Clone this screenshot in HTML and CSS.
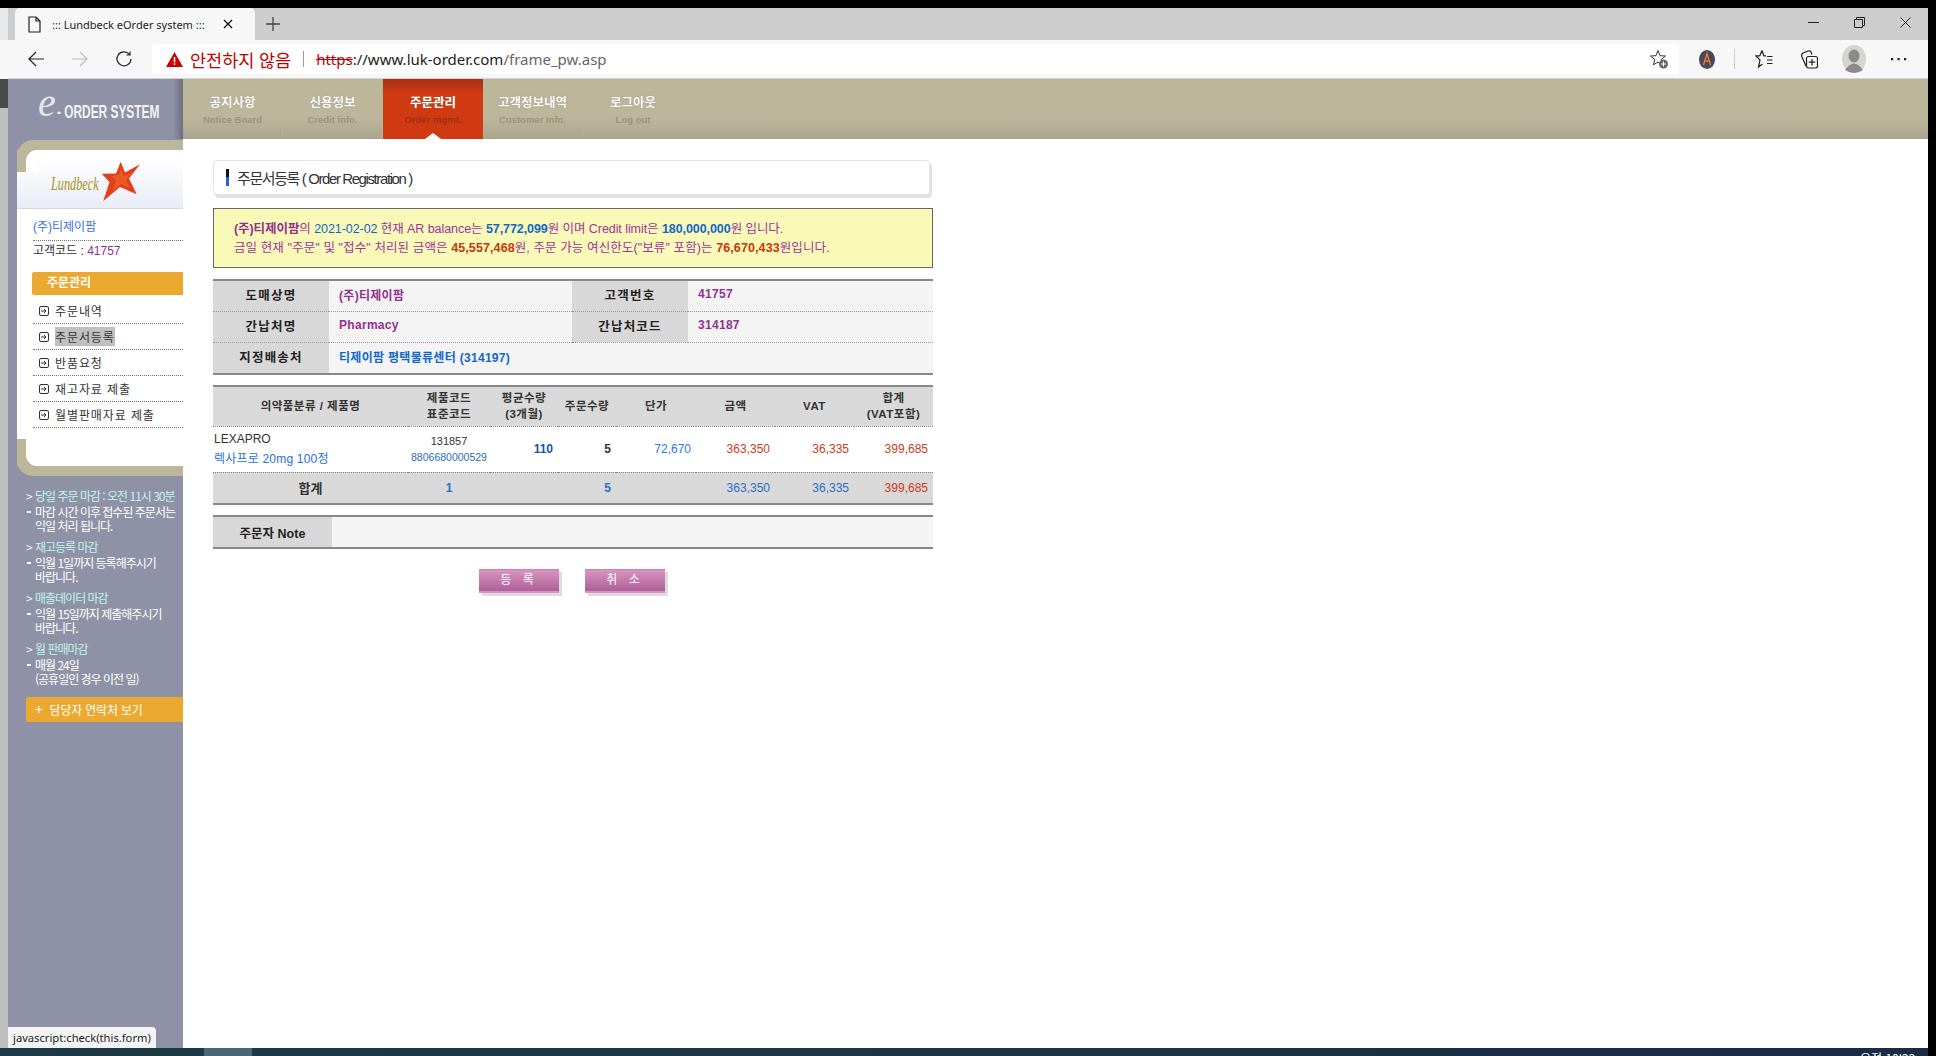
FILE: index.html
```html
<!DOCTYPE html>
<html lang="ko">
<head>
    <meta charset="UTF-8">
    <title>:: Lundbeck eOrder system ::</title>
    <link rel="stylesheet" href="styles.css">
</head>
<body>

<div class="screen">
    <div class="left-strip">
        <div class="ls-tab"></div>
        <div class="ls-top"></div>
        <div class="ls-mid"></div>
        <div class="ls-rest"></div>
    </div>

    <div class="window">
        <!-- tab strip -->
        <div class="tabstrip">
            <div class="tab">
                <svg class="tab-doc" width="13" height="17" viewBox="0 0 13 17" fill="none" stroke="#222" stroke-width="1.2"><path d="M1 1h7l4 4v11H1zM8 1v4h4"/></svg>
                <span class="tab-title">::: Lundbeck eOrder system :::</span>
                <svg class="tab-close" width="10" height="10" viewBox="0 0 10 10" stroke="#111" stroke-width="1.4"><path d="M1 1l8 8M9 1l-8 8"/></svg>
            </div>
            <svg class="tab-new" width="14" height="14" viewBox="0 0 14 14" stroke="#444" stroke-width="1.3"><path d="M7 0v14M0 7h14"/></svg>
            <div class="win-btns">
                <div class="win-btn"><svg width="11" height="11" viewBox="0 0 11 11" stroke="#222"><path d="M0 5.5h11"/></svg></div>
                <div class="win-btn"><svg width="11" height="11" viewBox="0 0 11 11" fill="none" stroke="#222"><path d="M.5 2.5h8v8h-8zM2.5 2.5v-2h8v8h-2"/></svg></div>
                <div class="win-btn"><svg width="11" height="11" viewBox="0 0 11 11" stroke="#222"><path d="M.5.5l10 10M10.5.5l-10 10"/></svg></div>
            </div>
        </div>

        <!-- toolbar -->
        <div class="toolbar">
            <div class="tb-btn"><svg width="16" height="16" viewBox="0 0 16 16" fill="none" stroke="#222" stroke-width="1.2"><path d="M16 8H1M8 1L1 8l7 7"/></svg></div>
            <div class="tb-btn"><svg width="16" height="16" viewBox="0 0 16 16" fill="none" stroke="#bbb" stroke-width="1.2"><path d="M0 8h15M8 1l7 7-7 7"/></svg></div>
            <div class="tb-btn"><svg width="16" height="16" viewBox="0 0 16 16" fill="none" stroke="#222" stroke-width="1.2"><path d="M13.5 3.5A7 7 0 1 0 15 8M14 .5v3.5h-3.6"/></svg></div>
            <div class="addr">
                <svg class="addr-warn" width="17" height="15" viewBox="0 0 17 15"><path d="M8.5 0L17 15H0z" fill="#c80000"/><path d="M7.7 5h1.6v5.2H7.7zM7.7 11.2h1.6v1.6H7.7z" fill="#fff"/></svg>
                <span class="addr-warn-text">안전하지 않음</span>
                <span class="addr-sep"></span>
                <span class="addr-url"><s class="url-https">https</s>://www.luk-order.com<span class="url-path">/frame_pw.asp</span></span>
                <svg class="addr-star" width="20" height="20" viewBox="0 0 20 20"><path d="M9 1.5l2 5.2 5.5.3-4.3 3.5 1.4 5.3L9 13l-4.6 2.8 1.4-5.3L1.500 7 7 6.700z" fill="none" stroke="#333"/><circle cx="14.500" cy="15" r="4.500" fill="#666"/><path d="M14.500 12.500v5M12 15h5" stroke="#fff"/></svg>
            </div>
            <div class="tb-avatar">
                <svg width="16" height="19" viewBox="0 0 16 19"><ellipse cx="8" cy="9.500" rx="8" ry="9.500" fill="#474761"/><path d="M4.500 15L8 3.500 11.500 15M5.800 11h4.400" fill="none" stroke="#e8851f" stroke-width="1.300"/></svg>
            </div>
            <span class="tb-sep"></span>
            <div class="tb-icon"><svg width="18" height="20" viewBox="0 0 18 20" fill="none" stroke="#222" stroke-width="1.200"><path d="M7 1.500l1.800 5.300H11M4.800 6.800H.8L5 11 3.500 18 7.500 15M7 1.500L4.800 6.800M12 7.500h5.500M12 11h5.500M12 14.500h5.500"/></svg></div>
            <div class="tb-icon"><svg width="18" height="20" viewBox="0 0 18 20" fill="none" stroke="#222" stroke-width="1.200"><path d="M6 17L2 8q-1-3 1-4l5-2q2-.5 3 1l1 2.500"/><rect x="6.500" y="7.500" width="11" height="11.500" rx="2"/><path d="M12 10v6.500M8.800 13.200h6.400"/></svg></div>
            <div class="tb-icon"><svg width="24" height="28" viewBox="0 0 24 28"><ellipse cx="12" cy="14" rx="12" ry="14" fill="#d4d4d2"/><ellipse cx="12" cy="11" rx="5.500" ry="6.500" fill="#8b8a88"/><path d="M3 25q9-13 18 0q-9 6-18 0z" fill="#8b8a88"/></svg></div>
            <div class="tb-icon"><svg width="16" height="4" viewBox="0 0 16 4" fill="#222"><rect x="0" y="1" width="2.200" height="2.200"/><rect x="6.500" y="1" width="2.200" height="2.200"/><rect x="13" y="1" width="2.200" height="2.200"/></svg></div>
        </div>

        <!-- page -->
        <div class="page">
            <aside class="side">
                <div class="brand">
                    <span class="brand-e">e</span>
                    <span class="brand-text">- ORDER SYSTEM</span>
                </div>

                <div class="card">
                    <div class="card-in">
                        <div class="corner"></div>
                        <div class="corner corner-bot"></div>
                        <div class="logo-box">
                            <span class="lund">Lundbeck</span>
                            <svg class="star" width="41" height="41" viewBox="0 0 41 41"><path d="M20.700.7L25 11.500 40 3.300 29 17.500 36.700 33.300 20 26 3.300 40 9.500 21 1.700 12.700 16 12.500z" fill="#e23f1c"/><path d="M21 8l3 7 7-3-5 7 4 8-9-4-8 7 3-11-5-4 8-1z" fill="#ea5a22"/></svg>
                        </div>
                        <div class="cust-name">(주)티제이팜</div>
                        <div class="cust-code">고객코드 : <span class="purple">41757</span></div>
                        <div class="menu-head">주문관리</div>
                        <ul class="menu">
                            <li><svg class="mi" width="10" height="10" viewBox="0 0 10 10" fill="none" stroke="#333"><rect x=".5" y=".5" width="9" height="9" rx="1.500"/><path d="M2 5h5M5 3l2 2-2 2"/></svg><span>주문내역</span></li>
                            <li><svg class="mi" width="10" height="10" viewBox="0 0 10 10" fill="none" stroke="#333"><rect x=".5" y=".5" width="9" height="9" rx="1.500"/><path d="M2 5h5M5 3l2 2-2 2"/></svg><span class="sel">주문서등록</span></li>
                            <li><svg class="mi" width="10" height="10" viewBox="0 0 10 10" fill="none" stroke="#333"><rect x=".5" y=".5" width="9" height="9" rx="1.500"/><path d="M2 5h5M5 3l2 2-2 2"/></svg><span>반품요청</span></li>
                            <li><svg class="mi" width="10" height="10" viewBox="0 0 10 10" fill="none" stroke="#333"><rect x=".5" y=".5" width="9" height="9" rx="1.500"/><path d="M2 5h5M5 3l2 2-2 2"/></svg><span>재고자료 제출</span></li>
                            <li><svg class="mi" width="10" height="10" viewBox="0 0 10 10" fill="none" stroke="#333"><rect x=".5" y=".5" width="9" height="9" rx="1.500"/><path d="M2 5h5M5 3l2 2-2 2"/></svg><span>월별판매자료 제출</span></li>
                        </ul>
                    </div>
                </div>

                <div class="dues">
                    <div class="due">
                        <div class="due-title">당일 주문 마감 : 오전 11시 30분</div>
                        <div class="due-body">마감 시간 이후 접수된 주문서는<br>익일 처리 됩니다.</div>
                    </div>
                    <div class="due">
                        <div class="due-title">재고등록 마감</div>
                        <div class="due-body">익월 1일까지 등록해주시기<br>바랍니다.</div>
                    </div>
                    <div class="due">
                        <div class="due-title">매출데이터 마감</div>
                        <div class="due-body">익월 15일까지 제출해주시기<br>바랍니다.</div>
                    </div>
                    <div class="due">
                        <div class="due-title">월 판매마감</div>
                        <div class="due-body">매월 24일<br>(공휴일인 경우 이전 일)</div>
                    </div>
                </div>
                <div class="contact"><span class="plus">+</span>담당자 연락처 보기</div>
            </aside>

            <div class="content">
                <nav class="topnav">
                    <a class="nav-item"><b>공지사항</b><small>Notice Board</small></a>
                    <a class="nav-item"><b>신용정보</b><small>Credit info.</small></a>
                    <a class="nav-item active"><b>주문관리</b><small>Order mgmt.</small></a>
                    <a class="nav-item"><b>고객정보내역</b><small>Customer Info.</small></a>
                    <a class="nav-item"><b>로그아웃</b><small>Log out</small></a>
                </nav>

                <main class="main">
                    <h1 class="title"><span class="title-bar"></span>주문서등록 ( Order Registration )</h1>

                    <div class="notice">
                        <p class="n1"><b class="purple">(주)티제이팜</b>의 <span class="blue">2021-02-02</span> 현재 AR balance는 <b class="blue">57,772,099</b>원 이며 Credit limit은 <b class="blue">180,000,000</b>원 입니다.</p>
                        <p class="n2">금일 현재 "주문" 및 "접수" 처리된 금액은 <b class="red">45,557,468</b>원, 주문 가능 여신한도("보류" 포함)는 <b class="red">76,670,433</b>원입니다.</p>
                    </div>

                    <table class="info">
                        <colgroup><col class="c-label"><col class="c-val"><col class="c-label"><col></colgroup>
                        <tr><th>도매상명</th><td class="purple">(주)티제이팜</td><th>고객번호</th><td class="purple">41757</td></tr>
                        <tr><th>간납처명</th><td class="purple">Pharmacy</td><th>간납처코드</th><td class="purple">314187</td></tr>
                        <tr class="info-last"><th>지정배송처</th><td class="ship" colspan="3">티제이팜 평택물류센터 (314197)</td></tr>
                    </table>

                    <table class="order">
                        <colgroup>
                            <col class="o1"><col class="o2"><col class="o3"><col class="o4">
                            <col class="o5"><col class="o6"><col class="o7"><col class="o8">
                        </colgroup>
                        <tr class="o-head">
                            <th>의약품분류 / 제품명</th>
                            <th>제품코드<br>표준코드</th>
                            <th>평균수량<br>(3개월)</th>
                            <th>주문수량</th>
                            <th>단가</th>
                            <th>금액</th>
                            <th>VAT</th>
                            <th>합계<br>(VAT포함)</th>
                        </tr>
                        <tr class="o-row">
                            <td class="prod"><span class="prod-en">LEXAPRO</span><span class="prod-ko">렉사프로 20mg 100정</span></td>
                            <td class="codes">131857<br><span class="std">8806680000529</span></td>
                            <td class="num avg">110</td>
                            <td class="num qty">5</td>
                            <td class="num price">72,670</td>
                            <td class="num money">363,350</td>
                            <td class="num money">36,335</td>
                            <td class="num money">399,685</td>
                        </tr>
                        <tr class="o-total">
                            <th class="tot-label">합계</th>
                            <td class="tot-count">1</td>
                            <td></td>
                            <td class="num tot-qty">5</td>
                            <td></td>
                            <td class="num tot-blue">363,350</td>
                            <td class="num tot-blue">36,335</td>
                            <td class="num money">399,685</td>
                        </tr>
                    </table>

                    <table class="note">
                        <colgroup><col class="n-label"><col></colgroup>
                        <tr><th>주문자 Note</th><td></td></tr>
                    </table>

                    <div class="btns">
                        <a class="btn">등 록</a>
                        <a class="btn">취 소</a>
                    </div>
                </main>
            </div>

            <div class="status">javascript:check(this.form)</div>
        </div>
    </div>
</div>

<div class="taskbar">
    <span class="task-on"></span>
    <span class="clock">오전 10:22</span>
</div>

</body>
</html>
```

FILE: styles.css
```css
html, body {
    margin: 0;
    padding: 0;
    height: 1056px;
    overflow: hidden;
    background: #000;
}

body {
    font-family: "Liberation Sans", "Noto Sans CJK KR", sans-serif;
    font-size: 12px;
    color: #333;
}

.screen {
    display: flex;
    height: 1040px;
    padding-top: 8px;
}

/* strip of the window behind */
.left-strip {
    width: 8px;
    display: flex;
    flex-direction: column;
}

.ls-tab {
    height: 32px;
    background: #e6e8ea;
}

.ls-top {
    height: 39px;
    background: #f7f7f7;
}

.ls-mid {
    height: 29px;
    background: #4a4a4a;
}

.ls-rest {
    flex: 1;
    background: #bfbfbf;
}

.window {
    width: 1920px;
    display: flex;
    flex-direction: column;
}

/* Tab strip */
.tabstrip {
    height: 32px;
    background: #cdcdcd;
    display: flex;
    align-items: flex-end;
    padding-left: 7px;
}

.tab {
    width: 240px;
    height: 32px;
    box-sizing: border-box;
    background: #f7f7f7;
    border-radius: 5px 5px 0 0;
    display: flex;
    align-items: center;
    padding-left: 13px;
    font-family: "Noto Sans", sans-serif;
    font-size: 11px;
    color: #222;
}

.tab-title {
    margin-left: 11px;
    width: 171px;
    white-space: nowrap;
}

.tab-new {
    margin: 0 0 9px 11px;
}

.win-btns {
    margin-left: auto;
    display: flex;
    height: 32px;
}

.win-btn {
    width: 46px;
    display: flex;
    align-items: center;
    justify-content: center;
    padding-bottom: 4px;
    box-sizing: border-box;
}

/* Toolbar */
.toolbar {
    height: 39px;
    box-sizing: border-box;
    background: #f7f7f7;
    border-bottom: 1px solid #d4d4d4;
    display: flex;
    align-items: center;
    padding-left: 6px;
}

.tb-btn {
    width: 44px;
    display: flex;
    justify-content: center;
}

.addr {
    margin-left: 6px;
    width: 1527px;
    height: 30px;
    box-sizing: border-box;
    background: #fff;
    border-radius: 4px;
    display: flex;
    align-items: center;
    padding-left: 14px;
    font-family: "Noto Sans", "Noto Sans CJK KR", sans-serif;
}

.addr-warn-text {
    margin-left: 7px;
    font-size: 17.500px;
    color: #c00000;
}

.addr-sep {
    width: 1px;
    height: 16px;
    background: #999;
    margin: 0 12px;
}

.addr-url {
    font-size: 15px;
    color: #222;
}

.url-https {
    color: #c00000;
}

.url-path {
    color: #666;
}

.addr-star {
    margin-left: auto;
    margin-right: 10px;
}

.tb-avatar {
    width: 45px;
    margin-left: 5px;
    display: flex;
    justify-content: center;
}

.tb-sep {
    width: 1px;
    height: 20px;
    background: #ccc;
    margin: 0 6px 0 5px;
}

.tb-icon {
    width: 45px;
    display: flex;
    justify-content: center;
}

/* Page */
.page {
    flex: 1;
    display: flex;
    position: relative;
    min-height: 0;
}

.side {
    width: 175px;
    flex: none;
    background: #8f92a6;
    color: #fff;
}

.brand {
    height: 60px;
    box-sizing: border-box;
    display: flex;
    align-items: center;
    padding-left: 30px;
    background: linear-gradient(to right, #8f92a6 165px, #6d6f80);
}

.brand-e {
    font-family: "Liberation Serif", serif;
    font-style: italic;
    font-size: 40px;
    line-height: 40px;
    color: #e6e7ee;
    margin-top: -12px;
}

.brand-text {
    font-weight: bold;
    font-size: 18px;
    white-space: nowrap;
    transform: scaleX(.66);
    transform-origin: left center;
    margin: 6px -48px 0 1px;
    color: #f2f2f2;
}

.card {
    margin-left: 9px;
    margin-top: 1px;
    padding: 10px 0;
    background: #bcb79b;
    border-radius: 16px 0 0 16px;
}

.card-in {
    position: relative;
    height: 316px;
    background: #fff;
    color: #333;
}

.corner {
    position: absolute;
    left: 0;
    top: 0;
    width: 20px;
    height: 22px;
    background: #bcb79b;
    z-index: 1;
}

.corner::after {
    content: "";
    position: absolute;
    left: 9px;
    top: 0;
    width: 11px;
    height: 22px;
    background: #fff;
    border-top-left-radius: 11px;
}

.corner-bot {
    top: auto;
    bottom: 0;
    height: 27px;
}

.corner-bot::after {
    height: 27px;
    border-top-left-radius: 0;
    border-bottom-left-radius: 11px;
}

.logo-box {
    position: absolute;
    left: 0;
    right: 0;
    top: 10px;
    height: 48px;
    box-sizing: content-box;
    background: linear-gradient(#fff, #e8ecf5);
    border-bottom: 1px solid #d5d8e0;
    display: flex;
    align-items: center;
    padding-left: 34px;
}

.lund {
    font-family: "Liberation Serif", serif;
    font-style: italic;
    font-size: 18px;
    color: #a89426;
    width: 49px;
    line-height: 18px;
    white-space: nowrap;
    display: block;
    transform: scaleX(.68);
    transform-origin: left center;
}

.star {
    margin-top: -6px;
    flex: none;
}

.cust-name {
    margin: 0 0 0 16px;
    padding: 59px 0 0;
    height: 31px;
    box-sizing: content-box;
    line-height: 36px;
    color: #3a70e8;
    border-bottom: 1px dotted #777;
    font-size: 12px;
}

.cust-code {
    margin-left: 16px;
    line-height: 21px;
    font-size: 12px;
}

.menu-head {
    margin: 10px 0 0 15px;
    height: 23px;
    line-height: 23px;
    padding-left: 15px;
    background: #eba92f;
    border-radius: 2px 0 0 2px;
    color: #fff;
    font-weight: bold;
}

.menu {
    list-style: none;
    margin: 3px 0 0 16px;
    padding: 0;
}

.menu li {
    height: 25px;
    border-bottom: 1px dotted #777;
    display: flex;
    align-items: center;
    font-family: "Noto Sans CJK KR", sans-serif;
    font-size: 12px;
    letter-spacing: .9px;
}

.mi {
    margin: 0 6px 0 6px;
    flex: none;
}

.sel {
    background: #c0c0c0;
    padding: 1px 0;
}

/* Deadlines */
.dues {
    padding: 12px 0 0 18px;
    font-family: "Noto Sans CJK KR", sans-serif;
    font-size: 12px;
    letter-spacing: -1px;
}

.due {
    height: 51px;
}

.due-title {
    line-height: 15px;
    color: #bff5f0;
    padding-left: 9px;
    position: relative;
    white-space: nowrap;
}

.due-title::before {
    content: ">";
    position: absolute;
    left: 0;
    color: #e8f5f5;
}

.due-body {
    margin-top: 2px;
    line-height: 14px;
    padding-left: 9px;
    position: relative;
    white-space: nowrap;
}

.due-body::before {
    content: "";
    position: absolute;
    left: 1px;
    top: 6px;
    width: 4px;
    height: 2px;
    background: #fff;
}

.contact {
    margin: 5px 0 0 18px;
    height: 25px;
    line-height: 25px;
    padding-left: 9px;
    background: #eba92f;
    border-radius: 2px 0 0 2px;
    color: #fff;
    font-family: "Noto Sans CJK KR", sans-serif;
    font-size: 12px;
    letter-spacing: -.2px;
}

.plus {
    font-size: 14px;
    margin-right: 7px;
}

/* Content */
.content {
    flex: 1;
    min-width: 0;
    background: #fff;
}

.topnav {
    height: 60px;
    display: flex;
    background: linear-gradient(#bcb79b 65%, #a9a48e);
}

.nav-item {
    width: 100px;
    box-sizing: border-box;
    border-right: 1px solid #b8b397;
    text-align: center;
    padding-top: 15px;
    position: relative;
}

.nav-item b {
    display: block;
    color: #fff;
    font-size: 12.500px;
    line-height: 18px;
    text-shadow: 0 0 1px #77735f;
}

.nav-item small {
    display: block;
    font-size: 9.500px;
    font-weight: bold;
    line-height: 13px;
    margin-top: 1px;
    color: #98947e;
}

.nav-item:nth-child(n+5) {
    border-right: none;
}

.nav-item.active {
    background: linear-gradient(#a82f12, #d03a12 25%, #d03a12);
    border-right: none;
}

.nav-item.active small {
    color: #a52c12;
}

.nav-item.active::after {
    content: "";
    position: absolute;
    left: 42px;
    bottom: 0;
    border: 8px solid transparent;
    border-top: none;
    border-bottom: 6px solid #fff;
}

.main {
    width: 720px;
    margin-left: 30px;
    padding-top: 21px;
}

.title {
    width: 717px;
    height: 35px;
    box-sizing: border-box;
    margin: 0;
    background: #fff;
    border: 1px solid #e4e4e4;
    border-radius: 4px;
    box-shadow: 2px 3px 0 #e2e2e2;
    display: flex;
    align-items: center;
    padding-left: 12px;
    font-weight: normal;
    font-size: 15px;
    letter-spacing: -1.400px;
    color: #333;
}

.title-bar {
    width: 3px;
    height: 17px;
    margin-right: 8px;
    background: linear-gradient(#111 50%, #2a5fd0 50%);
}

.notice {
    height: 60px;
    box-sizing: border-box;
    margin-top: 13px;
    padding: 11px 0 0 20px;
    background: #f9f9b8;
    border: 1px solid #666;
    color: #a0349c;
    line-height: 19px;
    font-size: 12.500px;
    white-space: nowrap;
}

.notice p {
    margin: 0;
}

.n1 {
    letter-spacing: -.07px;
}

.n2 {
    letter-spacing: .1px;
}

.purple {
    color: #93308f;
}

.blue {
    color: #1166cc;
}

.red {
    color: #c8380a;
}

table {
    border-collapse: collapse;
    table-layout: fixed;
    width: 720px;
}

.info {
    margin-top: 11px;
    border-top: 2px solid #888;
    border-bottom: 2px solid #888;
    background: #f4f4f4;
}

.c-label {
    width: 116px;
}

.c-val {
    width: 243px;
}

.info tr {
    height: 31px;
    border-bottom: 1px dotted #999;
}

.info tr.info-last {
    height: 32px;
    border-bottom: none;
}

.info th {
    background: #d8d8d8;
    font-size: 12.500px;
    letter-spacing: 1.200px;
    color: #222;
    padding: 0 0 2px;
}

.info td {
    padding: 0 0 3px 10px;
    font-weight: bold;
    font-size: 12px;
    letter-spacing: .3px;
}

.info td.ship {
    color: #1166cc;
}

.order {
    margin-top: 10px;
    border-top: 2px solid #888;
    border-bottom: 2px solid #888;
}

.o1 { width: 195px; }
.o2 { width: 82px; }
.o3 { width: 68px; }
.o4 { width: 58px; }
.o5 { width: 80px; }
.o6 { width: 79px; }
.o7 { width: 79px; }
.o8 { width: 79px; }

.o-head {
    height: 40px;
    background: #d9d9d9;
    border-bottom: 1px dotted #888;
}

.o-head th {
    font-size: 11.500px;
    line-height: 16px;
    letter-spacing: .5px;
    color: #333;
    padding: 0;
}

.o-row {
    height: 46px;
    border-bottom: 1px dotted #888;
}

.o-row td {
    padding: 0;
}

.o-row td.prod {
    padding-left: 1px;
}

.prod-en,
.prod-ko {
    display: block;
    line-height: 20px;
}

.prod-ko {
    color: #1f6fe0;
    letter-spacing: .2px;
}

.codes {
    text-align: center;
    font-size: 11px;
    line-height: 16px;
}

.std {
    color: #2c6cc0;
    font-size: 10.500px;
}

.o-row td.num,
.o-total td.num {
    text-align: right;
    padding-right: 5px;
}

.avg {
    font-weight: bold;
    color: #1556a8;
}

.qty {
    font-weight: bold;
}

.price {
    color: #2a78e4;
}

.money {
    color: #d03a1a;
}

.o-total {
    height: 32px;
    background: #d9d9d9;
}

.tot-label {
    font-size: 13px;
    color: #333;
}

.tot-count {
    text-align: center;
    font-weight: bold;
    color: #2a6dc8;
}

.tot-qty,
.tot-blue {
    color: #2a6dc8;
}

.tot-qty {
    font-weight: bold;
}

.note {
    margin-top: 10px;
    border-top: 2px solid #888;
    border-bottom: 2px solid #888;
    background: #f4f4f4;
}

.n-label {
    width: 119px;
}

.note tr {
    height: 32px;
}

.note th {
    background: #d8d8d8;
    font-size: 12.500px;
    color: #222;
}

.btns {
    margin-top: 20px;
    display: flex;
    justify-content: center;
    gap: 26px;
    padding-right: 2px;
}

.btn {
    width: 80px;
    height: 24px;
    box-sizing: border-box;
    border-top: 1px solid #d080b8;
    border-bottom: 2px solid #dc8fc8;
    background: linear-gradient(#d795c1, #ad6097);
    box-shadow: 3px 3px 0 #ddd;
    color: #fff;
    text-align: center;
    line-height: 20px;
    font-size: 12px;
    letter-spacing: 4px;
}

/* Status bubble over the page */
.status {
    position: absolute;
    left: 0;
    bottom: 0;
    width: 148px;
    height: 21px;
    box-sizing: border-box;
    padding-left: 5px;
    line-height: 21px;
    background: #f4f4f4;
    border-radius: 0 4px 0 0;
    font-family: "Noto Sans", sans-serif;
    font-size: 11.200px;
    color: #222;
    white-space: nowrap;
}

/* Taskbar, mostly cut off at the bottom */
.taskbar {
    width: 1928px;
    height: 8px;
    position: relative;
    overflow: hidden;
    background: linear-gradient(to right, #1f3a44, #1b2a45);
}

.task-on {
    position: absolute;
    left: 204px;
    top: 0;
    width: 48px;
    height: 8px;
    background: #4a6670;
}

.clock {
    position: absolute;
    left: 1860px;
    top: 3px;
    color: #fff;
    font-family: "Noto Sans CJK KR", sans-serif;
    font-size: 12px;
    line-height: 14px;
    white-space: nowrap;
}
```
